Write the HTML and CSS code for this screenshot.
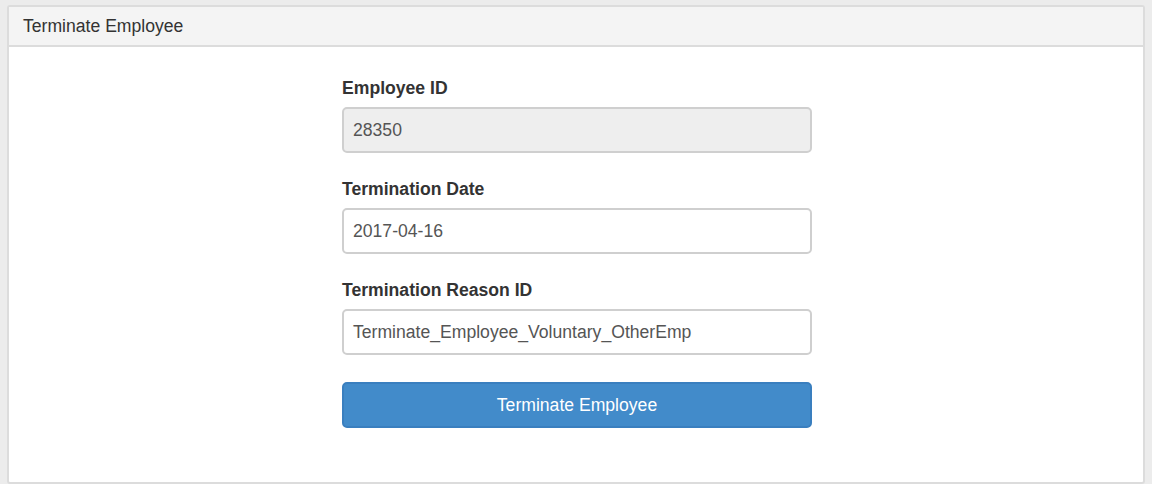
FILE: index.html
```html
<!DOCTYPE html>
<html>
<head>
<meta charset="utf-8">
<link rel="stylesheet" href="styles.css">
</head>
<body>
<div class="panel">
  <div class="panel-heading">Terminate Employee</div>
  <div class="panel-body">
    <form class="form">
      <div class="group">
        <label class="label">Employee ID</label>
        <div class="input disabled">28350</div>
      </div>
      <div class="group">
        <label class="label">Termination Date</label>
        <div class="input">2017-04-16</div>
      </div>
      <div class="group">
        <label class="label">Termination Reason ID</label>
        <div class="input">Terminate_Employee_Voluntary_OtherEmp</div>
      </div>
      <button type="button" class="btn">Terminate Employee</button>
    </form>
  </div>
</div>
</body>
</html>
```
FILE: styles.css
```css
html, body {
  margin: 0;
  padding: 0;
}
body {
  background: #ececec;
  font-family: "Liberation Sans", Arial, sans-serif;
  color: #333;
  padding: 5px 7px 0 7px;
  height: 484px;
  box-sizing: border-box;
}
.panel {
  background: #fff;
  border: 2px solid #dcdcdc;
  border-radius: 3px;
  height: 479px;
  box-sizing: border-box;
  display: flex;
  flex-direction: column;
}
.panel-heading {
  background: #f4f4f4;
  border-bottom: 2px solid #dcdcdc;
  height: 40px;
  box-sizing: border-box;
  padding: 0 14px;
  display: flex;
  align-items: center;
  font-size: 17.6px;
  color: #333;
}
.panel-body {
  flex: 1;
  display: flex;
  justify-content: center;
  padding-top: 29px;
  padding-left: 2px;
}
.form {
  width: 470px;
  display: flex;
  flex-direction: column;
}
.group {
  display: flex;
  flex-direction: column;
  margin-bottom: 24px;
}
.label {
  font-weight: bold;
  font-size: 17.6px;
  line-height: 24px;
  margin-bottom: 7px;
  color: #333;
}
.input {
  height: 46px;
  box-sizing: border-box;
  border: 2px solid #cfcfcf;
  border-radius: 5px;
  padding: 0 9px;
  display: flex;
  align-items: center;
  font-size: 17.6px;
  color: #555;
  background: #fff;
}
.input.disabled {
  background: #eeeeee;
}
.btn {
  margin-top: 3px;
  height: 46px;
  border: 2px solid #3a7fbf;
  border-radius: 5px;
  background: #428bca;
  color: #fff;
  font-family: "Liberation Sans", Arial, sans-serif;
  font-size: 17.6px;
  cursor: pointer;
}
```
